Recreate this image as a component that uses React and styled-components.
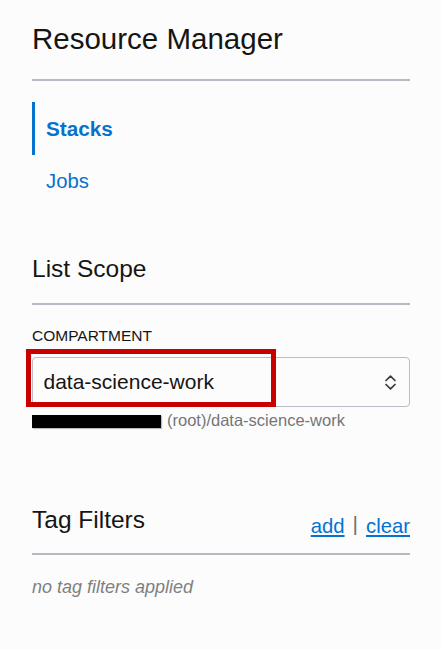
import React from "react";
import styled, { createGlobalStyle } from "styled-components";

const Global = createGlobalStyle`
  html, body { margin: 0; padding: 0; background: #fcfcfd; }
  body { font-family: "Liberation Sans", Arial, sans-serif; color: #161513; }
`;

const Panel = styled.div`
  padding: 22px 31px 40px 32px;
  display: flex;
  flex-direction: column;
`;

const PageTitle = styled.h1`
  margin: 0;
  font-size: 29.5px;
  line-height: 34px;
  font-weight: 400;
  color: #161513;
`;

const Divider = styled.div`
  height: 2px;
  background: #b4b9c2;
  margin-top: ${(p) => p.$top}px;
`;

const Nav = styled.nav`
  display: flex;
  flex-direction: column;
  margin-top: 21px;
`;

const NavItem = styled.a`
  display: flex;
  align-items: center;
  height: 53px;
  padding-left: 11px;
  border-left: 3px solid ${(p) => (p.$active ? "#0572ce" : "transparent")};
  font-size: ${(p) => (p.$active ? 20.7 : 20.3)}px;
  font-weight: ${(p) => (p.$active ? 700 : 400)};
  color: #0572ce;
  text-decoration: none;
`;

const SectionTitle = styled.h2`
  margin: ${(p) => p.$top}px 0 0;
  font-size: 24.5px;
  line-height: 30px;
  font-weight: 400;
  color: #161513;
`;

const FieldLabel = styled.div`
  margin-top: 22px;
  font-size: 15.5px;
  line-height: 18px;
  color: #161513;
  text-transform: uppercase;
`;

const SelectWrap = styled.div`
  position: relative;
  margin-top: 12px;
`;

const SelectBox = styled.div`
  box-sizing: border-box;
  height: 50px;
  border: 1.5px solid #b9bdc5;
  border-radius: 4px;
  background: #fcfcfd;
  display: flex;
  align-items: center;
  justify-content: space-between;
  padding: 0 13.5px 0 10.5px;
  font-size: 21px;
  color: #161513;
`;

const Annotation = styled.div`
  position: absolute;
  left: -6px;
  top: -8px;
  width: 250px;
  height: 58px;
  box-sizing: border-box;
  border: 5px solid #c80000;
  pointer-events: none;
`;

const PathLine = styled.div`
  margin-top: 3px;
  display: flex;
  align-items: center;
  gap: 6px;
  font-size: 16.5px;
  line-height: 20px;
  color: #757575;
`;

const Redacted = styled.span`
  display: inline-block;
  width: 129px;
  height: 13px;
  background: #000;
  margin-top: 2px;
  box-shadow: 1px 1px 1px rgba(0, 0, 0, 0.25);
`;

const HeaderRow = styled.div`
  display: flex;
  justify-content: space-between;
  align-items: flex-start;
  height: 30px;
  margin-top: 75px;
`;

const Links = styled.div`
  margin-top: 9px;
  display: flex;
  align-items: baseline;
  gap: 8px;
  font-size: 20.3px;
  line-height: 24px;
`;

const LinkText = styled.a`
  color: #0572ce;
  text-decoration: underline;
  text-underline-offset: 2px;
  text-decoration-thickness: 2px;
`;

const Sep = styled.span`
  color: #6f6f6f;
  font-size: 21px;
  font-weight: 300;
  position: relative;
  top: -2px;
`;

const EmptyNote = styled.div`
  margin-top: 21px;
  font-size: 18px;
  line-height: 22px;
  font-style: italic;
  color: #808080;
`;

const Chevrons = () => (
  <svg width="11" height="15" viewBox="0 0 11 15" fill="none" stroke="#3a3a3a" strokeWidth="1.7" strokeLinecap="round" strokeLinejoin="round">
    <polyline points="1,5.5 5.5,1.2 10,5.5" />
    <polyline points="1,9.5 5.5,13.8 10,9.5" />
  </svg>
);

export default function App() {
  return (
    <>
      <Global />
      <Panel>
        <PageTitle>Resource Manager</PageTitle>
        <Divider $top={23} />
        <Nav>
          <NavItem href="#" $active>Stacks</NavItem>
          <NavItem href="#">Jobs</NavItem>
        </Nav>
        <SectionTitle $top={46}>List Scope</SectionTitle>
        <Divider $top={19} />
        <FieldLabel>Compartment</FieldLabel>
        <SelectWrap>
          <SelectBox>
            <span>data-science-work</span>
            <Chevrons />
          </SelectBox>
          <Annotation />
        </SelectWrap>
        <PathLine>
          <Redacted />
          <span>(root)/data-science-work</span>
        </PathLine>
        <HeaderRow>
          <SectionTitle $top={0}>Tag Filters</SectionTitle>
          <Links>
            <LinkText href="#">add</LinkText>
            <Sep>|</Sep>
            <LinkText href="#">clear</LinkText>
          </Links>
        </HeaderRow>
        <Divider $top={18} />
        <EmptyNote>no tag filters applied</EmptyNote>
      </Panel>
    </>
  );
}
